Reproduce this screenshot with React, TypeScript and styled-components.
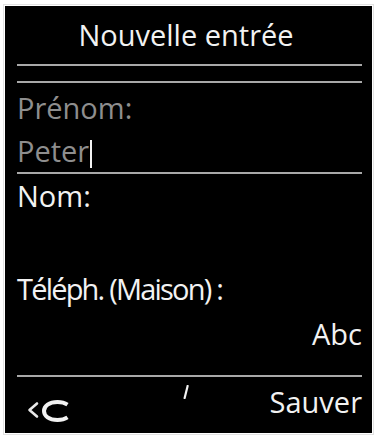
import React from 'react'
import styled, { createGlobalStyle } from 'styled-components'

const GlobalStyle = createGlobalStyle`
  html, body {
    margin: 0;
    padding: 0;
    background: #ffffff;
  }
`

const Page = styled.div`
  width: 376px;
  height: 437px;
  padding: 6px 4px 4px 5px;
  box-sizing: border-box;
`

const Screen = styled.div`
  width: 367px;
  height: 427px;
  background: #000;
  outline: 1px solid #e2e2e2;
  outline-offset: 1px;
  padding: 0 10px 0 12px;
  box-sizing: border-box;
  display: flex;
  flex-direction: column;
  font-family: 'Open Sans', 'Noto Sans', sans-serif;
  font-size: 29px;
  color: #f2f2f2;
`

const Title = styled.div`
  height: 58px;
  line-height: 58px;
  text-align: center;
  padding-right: 7px;
`

const Rule = styled.div<{ gap?: number }>`
  height: 2px;
  background: #a8a8a8;
  margin-top: ${p => p.gap ?? 0}px;
  flex-shrink: 0;
`

const Line = styled.div<{ dim?: boolean; right?: boolean; tight?: boolean; h?: number; gap?: number }>`
  height: ${p => p.h ?? 44}px;
  line-height: ${p => p.h ?? 44}px;
  margin-top: ${p => p.gap ?? 0}px;
  color: ${p => (p.dim ? '#8e8e8e' : '#f2f2f2')};
  text-align: ${p => (p.right ? 'right' : 'left')};
  letter-spacing: ${p => (p.tight ? '-1.8px' : '0')};
  white-space: nowrap;
  flex-shrink: 0;
`

const Cursor = styled.span`
  display: inline-block;
  width: 2px;
  height: 28px;
  background: #f2f2f2;
  margin-left: 1px;
  vertical-align: -6px;
`

const SoftKeys = styled.div`
  display: grid;
  grid-template-columns: 1fr auto 1fr;
  align-items: start;
  height: 44px;
  line-height: 44px;
  margin-top: 3px;
`

const BackIcon = styled.svg`
  display: block;
  margin: 20px 0 0 10px;
`

const Tick = styled.svg`
  display: block;
  margin: 5px 7px 0 0;
`

const SaveKey = styled.span`
  text-align: right;
`

export default function App() {
  return (
    <>
      <GlobalStyle />
      <Page>
        <Screen>
          <Title>Nouvelle entrée</Title>
          <Rule />
          <Rule gap={15} />
          <Line dim gap={3}>Prénom:</Line>
          <Line dim h={42}>
            Peter
            <Cursor />
          </Line>
          <Rule />
          <Line>Nom:</Line>
          <Line />
          <Line tight gap={5}>Téléph. (Maison) :</Line>
          <Line right gap={1}>Abc</Line>
          <Rule gap={19} />
          <SoftKeys>
            <BackIcon width="44" height="22" viewBox="0 0 44 22">
              <path
                d="M10 3.5 L2.5 10 L10 16.5"
                fill="none"
                stroke="#e8e8e8"
                strokeWidth="2.6"
                strokeLinecap="round"
                strokeLinejoin="round"
              />
              <path
                d="M40.5 4.6 C37.4 2.6 34.2 2 30.5 2 C22 2 17 6 17 11 C17 16 22 20 30.5 20 C34.2 20 37.4 19.4 40.5 17.4"
                fill="none"
                stroke="#f2f2f2"
                strokeWidth="4"
                strokeLinecap="butt"
              />
            </BackIcon>
            <Tick width="6" height="14" viewBox="0 0 6 14">
              <path d="M4.6 1 L1.6 13" stroke="#f2f2f2" strokeWidth="2.2" strokeLinecap="round" />
            </Tick>
            <SaveKey>Sauver</SaveKey>
          </SoftKeys>
        </Screen>
      </Page>
    </>
  )
}
